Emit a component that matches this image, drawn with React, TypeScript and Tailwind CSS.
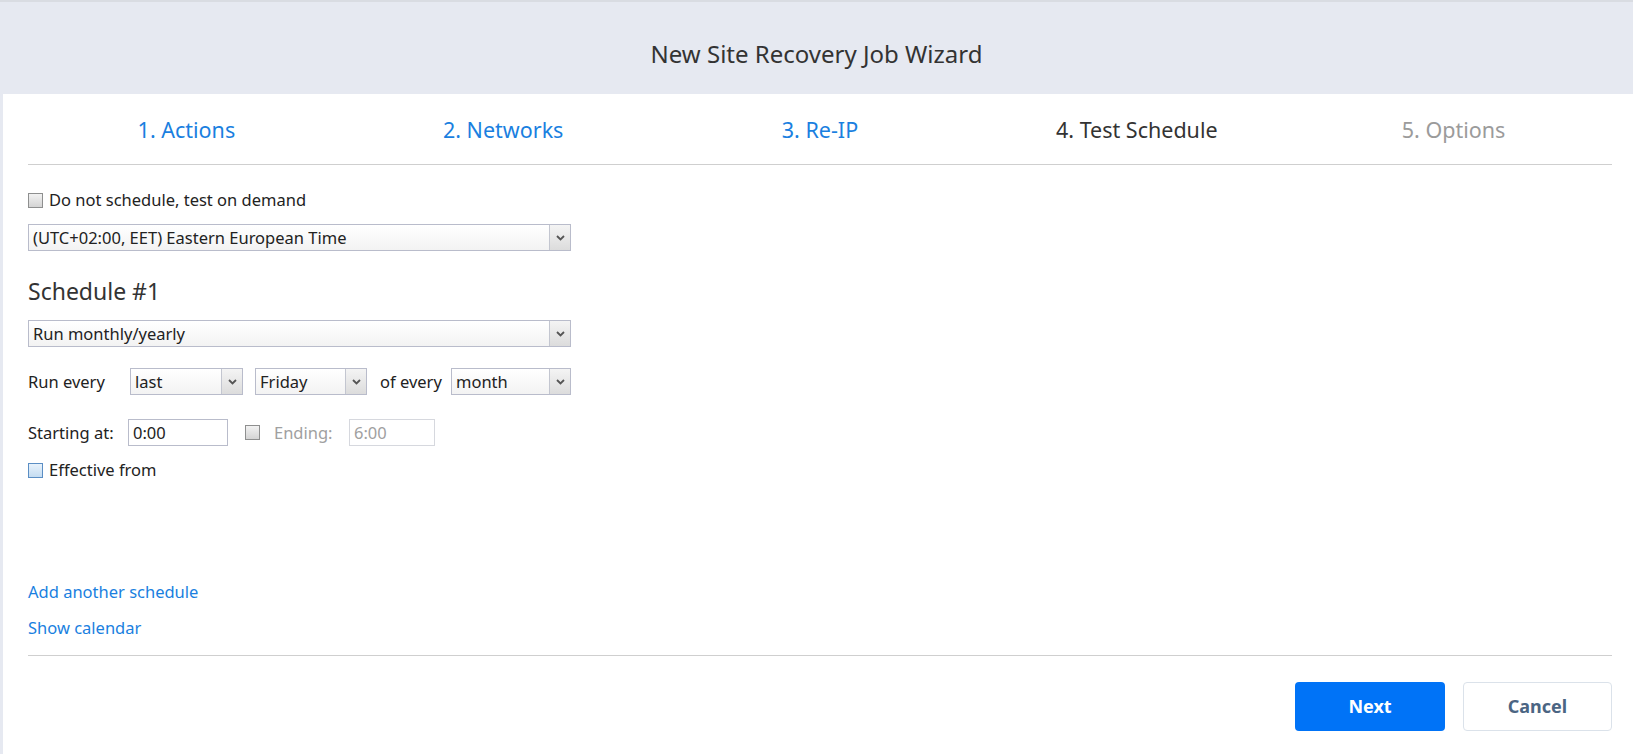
import React from 'react';

const font = { fontFamily: '"Noto Sans", "Open Sans", Arial, sans-serif' };

function Arrow() {
  return (
    <div className="flex h-full w-[21px] shrink-0 items-center justify-center border-l border-[#c3c6d0] bg-gradient-to-b from-[#f4f4f4] to-[#dcdcdc]">
      <svg width="9" height="6" viewBox="0 0 9 6">
        <path d="M1 1 L4.5 4.5 L8 1" fill="none" stroke="#555" strokeWidth="1.8" />
      </svg>
    </div>
  );
}

function Select({ value, className }: { value: string; className: string }) {
  return (
    <div className={`flex h-[27px] items-stretch border border-[#b9bccb] bg-gradient-to-b from-white to-[#f3f3f3] ${className}`}>
      <div className="flex flex-1 items-center pl-[4px] text-[#222]">{value}</div>
      <Arrow />
    </div>
  );
}

function Checkbox({ blue = false }: { blue?: boolean }) {
  return (
    <span
      className={`inline-block h-[15px] w-[15px] shrink-0 border ${
        blue ? 'border-[#5b8ec4] bg-gradient-to-b from-[#e8f2fb] to-[#c4dcf1]' : 'border-[#8e8f8f] bg-gradient-to-b from-[#f2f2f2] to-[#d4d4d4]'
      }`}
    />
  );
}

export default function App() {
  const tabs = [
    { label: '1. Actions', cls: 'text-[#1a7fe0]' },
    { label: '2. Networks', cls: 'text-[#1a7fe0]' },
    { label: '3. Re-IP', cls: 'text-[#1a7fe0]' },
    { label: '4. Test Schedule', cls: 'text-[#333]' },
    { label: '5. Options', cls: 'text-[#9b9b9b]' },
  ];

  return (
    <div className="flex h-[754px] w-[1633px] flex-col overflow-hidden bg-[#e6e9f1]" style={font}>
      {/* header */}
      <div className="flex h-[94px] shrink-0 items-center justify-center border-t-2 border-[#d9dce2] pt-[12px] text-[24px] text-[#333]">
        New Site Recovery Job Wizard
      </div>

      <div className="ml-[3px] flex flex-1 flex-col bg-white pl-[25px] pr-[21px]">
        {/* tabs */}
        <div className="grid h-[71px] grid-cols-5 items-center border-b border-[#cfcfcf] pt-[2px] text-[21.5px]">
          {tabs.map((t) => (
            <div key={t.label} className={`text-center ${t.cls}`}>
              {t.label}
            </div>
          ))}
        </div>

        {/* form */}
        <div className="flex flex-col text-[16.5px] leading-[22px] text-[#222]">
          <label className="mt-[24px] flex items-center gap-[6px]">
            <Checkbox />
            Do not schedule, test on demand
          </label>

          <Select value="(UTC+02:00, EET) Eastern European Time" className="mt-[13px] w-[543px]" />

          <div className="mt-[25px] text-[23px] leading-[30px] text-[#333]">Schedule #1</div>

          <Select value="Run monthly/yearly" className="mt-[14px] w-[543px]" />

          <div className="mt-[21px] flex h-[27px] items-center">
            <span className="w-[102px]">Run every</span>
            <Select value="last" className="w-[113px]" />
            <Select value="Friday" className="ml-[12px] w-[112px]" />
            <span className="ml-[13px] w-[71px]">of every</span>
            <Select value="month" className="w-[120px]" />
          </div>

          <div className="mt-[24px] flex h-[27px] items-center">
            <span className="w-[100px]">Starting at:</span>
            <div className="flex h-[27px] w-[100px] items-center border border-[#b9bccb] pl-[4px]">0:00</div>
            <span className="ml-[17px] flex">
              <Checkbox />
            </span>
            <span className="ml-[14px] w-[75px] text-[#a0a0a0]">Ending:</span>
            <div className="flex h-[27px] w-[86px] items-center border border-[#d6d8de] pl-[4px] text-[#a0a0a0]">6:00</div>
          </div>

          <label className="mt-[13px] flex items-center gap-[6px]">
            <Checkbox blue />
            Effective from
          </label>

          <a className="mt-[100px] w-fit text-[#1a7fe0]">Add another schedule</a>
          <a className="mt-[14px] w-fit text-[#1a7fe0]">Show calendar</a>
        </div>

        <div className="mt-[16px] border-b border-[#cfcfcf]" />

        <div className="mt-[26px] flex justify-end gap-[18px]">
          <button className="h-[49px] w-[150px] rounded-[4px] bg-[#0073f7] text-[18px] font-bold text-white">Next</button>
          <button className="h-[49px] w-[149px] rounded-[4px] border border-[#dbe2ea] bg-white text-[18px] font-bold text-[#4b6583]">
            Cancel
          </button>
        </div>
      </div>
    </div>
  );
}
